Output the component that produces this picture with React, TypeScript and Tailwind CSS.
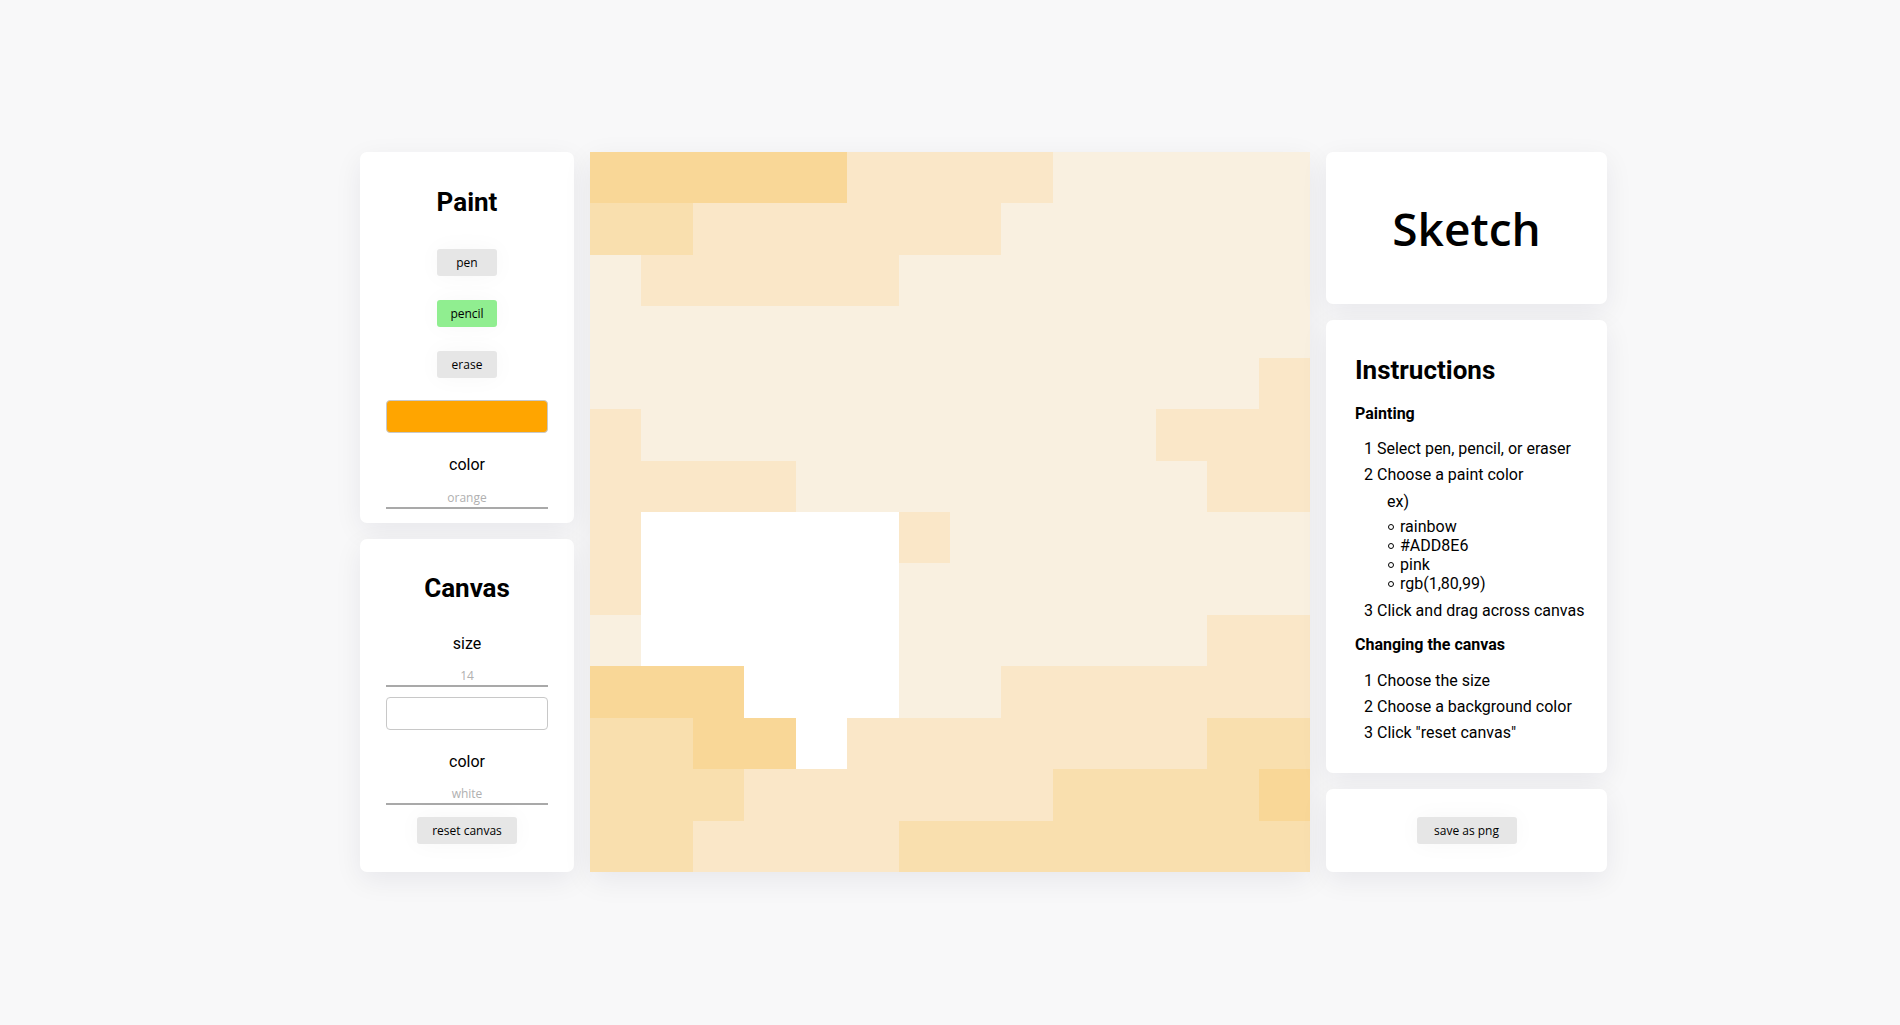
import React from "react";

const ROWS = [
  "44444222211111",
  "33222222111111",
  "12222211111111",
  "11111111111111",
  "11111111111112",
  "21111111111222",
  "22221111111122",
  "20000021111111",
  "20000011111111",
  "10000011111122",
  "44400011222222",
  "33440222222233",
  "33322222233334",
  "33222233333333",
];

const CELL: Record<string, string> = {
  "0": "bg-white",
  "1": "bg-[#f9f0e0]",
  "2": "bg-[#fae7c8]",
  "3": "bg-[#f9dfae]",
  "4": "bg-[#f9d797]",
};

const card = "bg-white rounded-[7px] shadow-[0_8px_28px_rgba(20,20,60,0.07)]";
const btn =
  "h-[27px] rounded-[3px] bg-[#e6e6e6] text-[12px] text-black font-['Open_Sans',sans-serif] flex items-center justify-center shadow-[0_0_24px_rgba(0,0,0,0.035)]";

function LineInput({ placeholder }: { placeholder: string }) {
  return (
    <input
      placeholder={placeholder}
      className="block w-[162px] h-[22px] border-0 border-b-2 border-[#a9a9a9] bg-transparent text-center text-[12px] font-['Open_Sans',sans-serif] placeholder:text-[#b0b0b0] outline-none"
    />
  );
}

export default function App() {
  return (
    <div className="min-h-screen w-full bg-[#f8f8f9] font-['Roboto',sans-serif] text-black">
      <div className="flex gap-4 pl-[360px] pt-[152px]">
        {/* Left column */}
        <div className="flex w-[214px] flex-col gap-4">
          <div className={`${card} flex flex-col items-center pt-[35px] pb-[14px]`}>
            <h2 className="h-[30px] leading-[30px] text-[26px] font-bold">Paint</h2>
            <button className={`${btn} mt-[32px] w-[60px]`}>pen</button>
            <button className={`${btn} mt-[24px] w-[60px] !bg-[#90ee90]`}>pencil</button>
            <button className={`${btn} mt-[24px] w-[60px]`}>erase</button>
            <div className="mt-[22px] h-[33px] w-[162px] rounded-[4px] border border-[#c8c8c8] bg-[#ffa500]" />
            <div className="mt-[22px] h-[20px] leading-[20px] text-[16px]">color</div>
            <div className="mt-[12px]">
              <LineInput placeholder="orange" />
            </div>
          </div>
          <div className={`${card} flex flex-col items-center pt-[34px] pb-[28px]`}>
            <h2 className="h-[30px] leading-[30px] text-[26px] font-bold">Canvas</h2>
            <div className="mt-[31px] h-[20px] leading-[20px] text-[16px]">size</div>
            <div className="mt-[11px]">
              <LineInput placeholder="14" />
            </div>
            <div className="mt-[10px] h-[33px] w-[162px] rounded-[4px] border border-[#c8c8c8] bg-white" />
            <div className="mt-[22px] h-[20px] leading-[20px] text-[16px]">color</div>
            <div className="mt-[11px]">
              <LineInput placeholder="white" />
            </div>
            <button className={`${btn} mt-[12px] w-[100px]`}>reset canvas</button>
          </div>
        </div>

        {/* Drawing canvas */}
        <div className="grid h-[720px] w-[720px] grid-cols-14 grid-rows-14 shadow-[0_8px_28px_rgba(20,20,60,0.07)]">
          {ROWS.map((row, r) =>
            row.split("").map((c, i) => <div key={`${r}-${i}`} className={CELL[c]} />)
          )}
        </div>

        {/* Right column */}
        <div className="flex w-[281px] flex-col gap-4">
          <div className={`${card} flex h-[152px] items-center justify-center`}>
            <h1 className="font-['Open_Sans',sans-serif] text-[46px] font-semibold leading-none">Sketch</h1>
          </div>
          <div className={`${card} pl-[29px] pr-4 pt-[35px] pb-[27px]`}>
            <h2 className="h-[30px] leading-[30px] text-[26px] font-bold">Instructions</h2>
            <h3 className="mt-[19px] h-[20px] leading-[20px] text-[16px] font-bold">Painting</h3>
            <div className="mt-[12px] pl-[9px] text-[16px]">
              <div className="leading-[26px]">1 Select pen, pencil, or eraser</div>
              <div className="leading-[26px]">2 Choose a paint color</div>
              <div className="mt-[1px] pl-[23px] leading-[26px]">ex)</div>
              <ul className="mt-[2px] pl-[24px] leading-[19px]">
                {["rainbow", "#ADD8E6", "pink", "rgb(1,80,99)"].map((t) => (
                  <li key={t} className="flex items-center">
                    <span className="mr-[6px] inline-block h-[6px] w-[6px] rounded-full border border-black" />
                    {t}
                  </li>
                ))}
              </ul>
              <div className="mt-[5px] leading-[26px]">3 Click and drag across canvas</div>
            </div>
            <h3 className="mt-[11px] h-[20px] leading-[20px] text-[16px] font-bold">Changing the canvas</h3>
            <div className="mt-[13px] pl-[9px] text-[16px]">
              <div className="leading-[26px]">1 Choose the size</div>
              <div className="leading-[26px]">2 Choose a background color</div>
              <div className="leading-[26px]">3 Click "reset canvas"</div>
            </div>
          </div>
          <div className={`${card} flex h-[83px] items-center justify-center`}>
            <button className={`${btn} w-[100px]`}>save as png</button>
          </div>
        </div>
      </div>
    </div>
  );
}
